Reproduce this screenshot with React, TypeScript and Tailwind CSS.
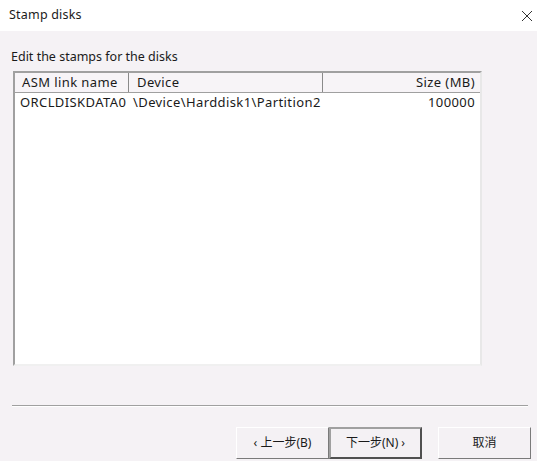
import React from 'react';

// One disk row in the stamp list
interface DiskRow {
  linkName: string;
  device: string;
  sizeMb: string;
}

const rows: DiskRow[] = [
  { linkName: 'ORCLDISKDATA0', device: '\\Device\\Harddisk1\\Partition2', sizeMb: '100000' },
];

const font = "font-['Noto_Sans','Noto_Sans_CJK_SC',sans-serif]";

function WizardButton({ label, pressed = false }: { label: string; pressed?: boolean }) {
  return (
    <button
      className={`h-[32px] w-[93px] text-[12px] text-[#1a1a1a] bg-[#f4f1f4] border ${
        pressed
          ? 'border-t-[#a0a0a0] border-l-[#a0a0a0] border-r-[#505050] border-b-[#505050] border-2'
          : 'border-t-white border-l-white border-r-[#7a7a7a] border-b-[#7a7a7a]'
      }`}
    >
      {label}
    </button>
  );
}

export default function App() {
  return (
    <div className={`w-[537px] h-[461px] flex flex-col bg-[#f5f2f5] ${font} text-[#1a1a1a]`}>
      {/* Title bar */}
      <div className="h-[31px] bg-white flex items-center justify-between pl-[9px] pr-[4px]">
        <span className="text-[12.5px] tracking-[0.2px]">Stamp disks</span>
        <svg width="12" height="12" viewBox="0 0 12 12">
          <path d="M1 1 L11 11 M11 1 L1 11" stroke="#333" strokeWidth="1" />
        </svg>
      </div>

      {/* Body */}
      <div className="flex flex-col px-[13px] pt-[18px]">
        <div className="text-[12.5px] leading-[16px] -ml-[2px]">Edit the stamps for the disks</div>

        <div className="mt-[6px] w-[469px] h-[295px] bg-white border-[2px] border-t-[#a0a0a0] border-l-[#a0a0a0] border-r-[#e8e8e8] border-b-[#f0f0f0] flex flex-col text-[13px] tracking-[0.4px]">
          {/* Header */}
          <div className="h-[20px] flex bg-[#f7f4f7] border-b border-[#a0a0a0]">
            <div className="w-[114px] pl-[7px] flex items-center border-r border-[#8a8a8a]">ASM link name</div>
            <div className="w-[194px] pl-[8px] flex items-center border-r border-[#8a8a8a]">Device</div>
            <div className="flex-1 pr-[5px] flex items-center justify-end">Size (MB)</div>
          </div>
          {rows.map((r) => (
            <div key={r.linkName} className="h-[20px] flex items-center">
              <div className="w-[114px] pl-[5px]">{r.linkName}</div>
              <div className="w-[194px] pl-[4px]">{r.device}</div>
              <div className="flex-1 pr-[5px] text-right">{r.sizeMb}</div>
            </div>
          ))}
        </div>

        <div className="mt-[39px] -mx-[1px] w-[516px] h-[2px] border-t border-[#a0a0a0] border-b border-b-white" />

        <div className="mt-[20px] flex justify-end">
          <div className="flex mr-[-7px]">
            <WizardButton label="‹ 上一步(B)" />
            <WizardButton label="下一步(N) ›" pressed />
            <div className="w-[16px]" />
            <WizardButton label="取消" />
          </div>
        </div>
      </div>
    </div>
  );
}
